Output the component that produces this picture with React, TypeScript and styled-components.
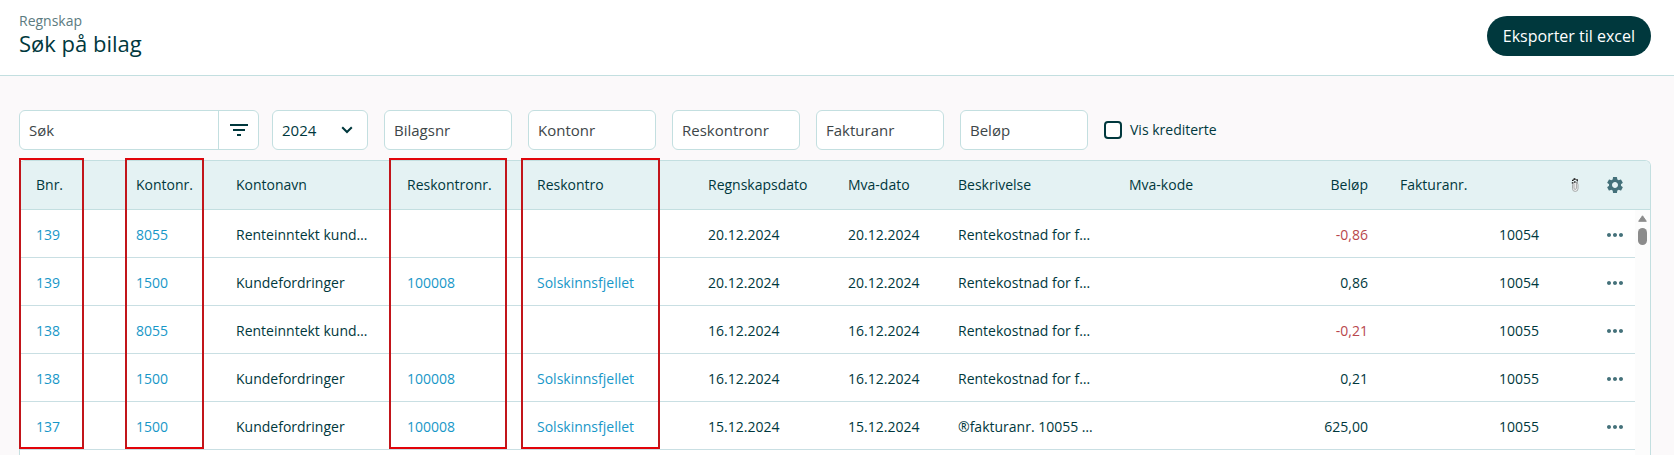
import React from 'react';
import styled, { createGlobalStyle } from 'styled-components';
import { MdFilterList, MdMoreHoriz, MdSettings } from 'react-icons/md';

const color = {
  ink: '#00383d',
  muted: '#5c7b7f',
  icon: '#44717a',
  field: '#3d4648',
  line: '#c3dfe0',
  head: '#e4f2f3',
  page: '#fbf9fa',
  link: '#1897c8',
  negative: '#b8474c',
};

const GlobalStyle = createGlobalStyle`
  *, *::before, *::after { box-sizing: border-box; }
  body {
    margin: 0;
    background: ${color.page};
    color: ${color.ink};
    font-family: 'Open Sans', 'Noto Sans', sans-serif;
    font-size: 14px;
    line-height: 20px;
  }
  button, input, select { font: inherit; color: inherit; }
`;

const Page = styled.div`
  display: flex;
  flex-direction: column;
  min-height: 100vh;
`;

const PageHeader = styled.header`
  display: flex;
  justify-content: space-between;
  align-items: flex-start;
  height: 76px;
  padding: 11px 23px 0 19px;
  background: #fff;
  border-bottom: 1px solid ${color.line};
`;

const Section = styled.div`
  color: ${color.muted};
`;

const Title = styled.h1`
  margin: 0;
  font-size: 22px;
  line-height: 24px;
  font-weight: 500;
`;

const PrimaryButton = styled.button`
  height: 40px;
  margin-top: 5px;
  padding: 0 16px;
  border: 0;
  border-radius: 20px;
  background: ${color.ink};
  color: #fff;
  font-size: 16px;
`;

const Main = styled.main`
  display: flex;
  flex: 1;
  flex-direction: column;
  gap: 10px;
  padding: 34px 23px 0 19px;
`;

const Filters = styled.form`
  display: flex;
  align-items: center;
  gap: 16px;
`;

const SearchGroup = styled.div`
  display: flex;
  gap: 13px;
`;

const SearchBox = styled.div`
  display: flex;
  width: 240px;
  height: 40px;
  border: 1px solid ${color.line};
  border-radius: 6px;
  background: #fff;
`;

const SearchInput = styled.input`
  flex: 1;
  min-width: 0;
  padding: 0 9px;
  border: 0;
  background: none;
  font-size: 15px;
  &::placeholder { color: ${color.field}; opacity: 1; }
`;

const FilterButton = styled.button`
  display: flex;
  align-items: center;
  justify-content: center;
  width: 40px;
  padding: 0;
  border: 0;
  border-left: 1px solid ${color.line};
  background: none;
`;

const SelectBox = styled.div`
  display: grid;
  width: 96px;
  height: 40px;
  border: 1px solid ${color.line};
  border-radius: 6px;
  background: #fff;
  & > * { grid-area: 1 / 1; }
  svg { align-self: center; justify-self: end; margin-right: 14px; pointer-events: none; }
`;

const Select = styled.select`
  appearance: none;
  padding: 0 9px;
  border: 0;
  background: none;
  font-size: 15px;
`;

const FilterInput = styled.input`
  width: 128px;
  height: 40px;
  padding: 0 9px;
  border: 1px solid ${color.line};
  border-radius: 6px;
  background: #fff;
  font-size: 15px;
  &::placeholder { color: ${color.field}; opacity: 1; }
`;

const CheckLabel = styled.label`
  display: flex;
  align-items: center;
  gap: 8px;
`;

const Checkbox = styled.input`
  appearance: none;
  width: 18px;
  height: 18px;
  margin: 0;
  border: 2px solid ${color.ink};
  border-radius: 4px;
  background: #fff;
`;

const Frame = styled.div`
  display: flex;
  flex: 1;
  align-items: stretch;
  border: 1px solid ${color.line};
  border-bottom: 0;
  border-radius: 6px 6px 0 0;
  background: #fff;
`;

const TableArea = styled.div`
  position: relative;
  flex: 1;
  min-width: 0;
  align-self: flex-start;
`;

const Table = styled.table`
  width: 100%;
  table-layout: fixed;
  border-collapse: separate;
  border-spacing: 0;
`;

type CellProps = { $align?: 'left' | 'right' | 'center'; $negative?: boolean };

const Th = styled.th<CellProps>`
  height: 49px;
  padding: ${(p) => (p.$align === 'center' ? '0' : '0 16px')};
  border-bottom: 1px solid ${color.line};
  background: ${color.head};
  font-weight: 500;
  text-align: ${(p) => p.$align ?? 'left'};
  white-space: nowrap;
  &:first-child { border-top-left-radius: 5px; }
`;

const Td = styled.td<CellProps>`
  height: 48px;
  padding: ${(p) => (p.$align === 'center' ? '2px 0 0' : '2px 16px 0')};
  border-bottom: 1px solid #c9dfe3;
  color: ${(p) => (p.$negative ? color.negative : 'inherit')};
  text-align: ${(p) => p.$align ?? 'left'};
  white-space: nowrap;
  overflow: hidden;
  text-overflow: ellipsis;
`;

const CellLink = styled.a`
  color: ${color.link};
  text-decoration: none;
`;

const IconButton = styled.button`
  display: flex;
  align-items: center;
  justify-content: center;
  width: 24px;
  height: 24px;
  margin: 0 auto;
  padding: 0;
  border: 0;
  background: none;
  color: ${color.icon};
`;

const ClipIcon = styled.svg`
  display: block;
  margin: 0 auto;
`;

const MarkerLayer = styled.div`
  position: absolute;
  inset: -3px 0 1px 0;
  display: grid;
  grid-template-columns: 100px 100px 1fr 130px 1fr 140px 110px 1fr 1fr 100px 1fr 40px 40px;
  pointer-events: none;
`;

const Marker = styled.div<{ $column: number; $start: number; $width: number }>`
  grid-row: 1;
  grid-column: ${(p) => p.$column};
  width: ${(p) => p.$width}px;
  margin-left: ${(p) => p.$start}px;
  border: 2px solid;
  border-color: #e20309 #c2151a;
`;

const Gutter = styled.div`
  display: flex;
  flex-direction: column;
  width: 15px;
`;

const GutterHead = styled.div`
  height: 49px;
  border-bottom: 1px solid ${color.line};
  border-top-right-radius: 5px;
  background: ${color.head};
`;

const Track = styled.div`
  display: flex;
  flex: 1;
  flex-direction: column;
  align-items: center;
  gap: 6px;
  padding-top: 5px;
  background: #fcfcfc;
`;

const Thumb = styled.div`
  width: 9px;
  height: 17px;
  border-radius: 5px;
  background: #8b8b8b;
`;

const columnWidths: (number | undefined)[] = [
  100, 100, undefined, 130, undefined, 140, 110, undefined, undefined, 100, undefined, 40, 40,
];

type Row = {
  bnr: string;
  account: string;
  accountName: string;
  ledgerNo?: string;
  ledger?: string;
  date: string;
  text: string;
  amount: string;
  invoice: string;
};

const interest = 'Rentekostnad for f…';

const rows: Row[] = [
  { bnr: '139', account: '8055', accountName: 'Renteinntekt kund…', date: '20.12.2024', text: interest, amount: '-0,86', invoice: '10054' },
  { bnr: '139', account: '1500', accountName: 'Kundefordringer', ledgerNo: '100008', ledger: 'Solskinnsfjellet', date: '20.12.2024', text: interest, amount: '0,86', invoice: '10054' },
  { bnr: '138', account: '8055', accountName: 'Renteinntekt kund…', date: '16.12.2024', text: interest, amount: '-0,21', invoice: '10055' },
  { bnr: '138', account: '1500', accountName: 'Kundefordringer', ledgerNo: '100008', ledger: 'Solskinnsfjellet', date: '16.12.2024', text: interest, amount: '0,21', invoice: '10055' },
  { bnr: '137', account: '1500', accountName: 'Kundefordringer', ledgerNo: '100008', ledger: 'Solskinnsfjellet', date: '15.12.2024', text: '®fakturanr. 10055 …', amount: '625,00', invoice: '10055' },
];

const filterFields = ['Bilagsnr', 'Kontonr', 'Reskontronr', 'Fakturanr', 'Beløp'];

export default function App() {
  return (
    <Page>
      <GlobalStyle />
      <PageHeader>
        <div>
          <Section>Regnskap</Section>
          <Title>Søk på bilag</Title>
        </div>
        <PrimaryButton type="button">Eksporter til excel</PrimaryButton>
      </PageHeader>
      <Main>
        <Filters>
          <SearchGroup>
            <SearchBox>
              <SearchInput type="text" placeholder="Søk" aria-label="Søk" />
              <FilterButton type="button" aria-label="Filter">
                <MdFilterList size={24} />
              </FilterButton>
            </SearchBox>
            <SelectBox>
              <Select aria-label="År" defaultValue="2024">
                <option>2024</option>
              </Select>
              <svg width="12" height="8" viewBox="0 0 12 8" fill="none" stroke={color.ink} strokeWidth="2">
                <path d="M1.2 1.2 6 6l4.8-4.8" />
              </svg>
            </SelectBox>
          </SearchGroup>
          {filterFields.map((name) => (
            <FilterInput key={name} type="text" placeholder={name} aria-label={name} />
          ))}
          <CheckLabel>
            <Checkbox type="checkbox" />
            Vis krediterte
          </CheckLabel>
        </Filters>
        <Frame>
          <TableArea>
            <Table>
              <colgroup>
                {columnWidths.map((width, i) => (
                  <col key={i} width={width} />
                ))}
              </colgroup>
              <thead>
                <tr>
                  <Th>Bnr.</Th>
                  <Th>Kontonr.</Th>
                  <Th>Kontonavn</Th>
                  <Th>Reskontronr.</Th>
                  <Th>Reskontro</Th>
                  <Th>Regnskapsdato</Th>
                  <Th>Mva-dato</Th>
                  <Th>Beskrivelse</Th>
                  <Th>Mva-kode</Th>
                  <Th $align="right">Beløp</Th>
                  <Th>Fakturanr.</Th>
                  <Th $align="center">
                    <ClipIcon width="8" height="14" viewBox="0 0 8 14" fill="none" aria-label="Vedlegg">
                      <rect x="1.5" y="4" width="5.5" height="9.4" rx="2.7" fill="#f4f4f4" stroke="#9da1a1" strokeWidth="0.9" />
                      <path d="M3 5.5v4.7a1.2 1.2 0 0 0 2.4 0V4" stroke="#8d9292" strokeWidth="0.8" />
                      <path d="M2 1.5h4.4v3" stroke="#777" strokeWidth="0.8" />
                      <path d="M1 2.4h1.6M2.6 1h1.8M5.4 2.2H7M3.2 4h1.2M.8 4.8h1.4" stroke="#111" strokeWidth="1.3" />
                    </ClipIcon>
                  </Th>
                  <Th $align="center">
                    <IconButton type="button" aria-label="Innstillinger">
                      <MdSettings size={20} />
                    </IconButton>
                  </Th>
                </tr>
              </thead>
              <tbody>
                {rows.map((row, i) => (
                  <tr key={i}>
                    <Td><CellLink href="#bilag">{row.bnr}</CellLink></Td>
                    <Td><CellLink href="#konto">{row.account}</CellLink></Td>
                    <Td>{row.accountName}</Td>
                    <Td>{row.ledgerNo && <CellLink href="#reskontro">{row.ledgerNo}</CellLink>}</Td>
                    <Td>{row.ledger && <CellLink href="#reskontro">{row.ledger}</CellLink>}</Td>
                    <Td>{row.date}</Td>
                    <Td>{row.date}</Td>
                    <Td>{row.text}</Td>
                    <Td />
                    <Td $align="right" $negative={row.amount.startsWith('-')}>{row.amount}</Td>
                    <Td $align="right">{row.invoice}</Td>
                    <Td />
                    <Td $align="center">
                      <IconButton type="button" aria-label="Flere valg">
                        <MdMoreHoriz size={24} />
                      </IconButton>
                    </Td>
                  </tr>
                ))}
              </tbody>
            </Table>
            <MarkerLayer>
              <Marker $column={1} $start={-1} $width={65} />
              <Marker $column={2} $start={5} $width={79} />
              <Marker $column={4} $start={-2} $width={118} />
              <Marker $column={5} $start={0} $width={139} />
            </MarkerLayer>
          </TableArea>
          <Gutter>
            <GutterHead />
            <Track>
              <svg width="9" height="7" viewBox="0 0 9 7">
                <path d="M4.5 0.8 8.3 6.3H.7Z" fill="#8b8b8b" stroke="#8b8b8b" strokeLinejoin="round" />
              </svg>
              <Thumb />
            </Track>
          </Gutter>
        </Frame>
      </Main>
    </Page>
  );
}
